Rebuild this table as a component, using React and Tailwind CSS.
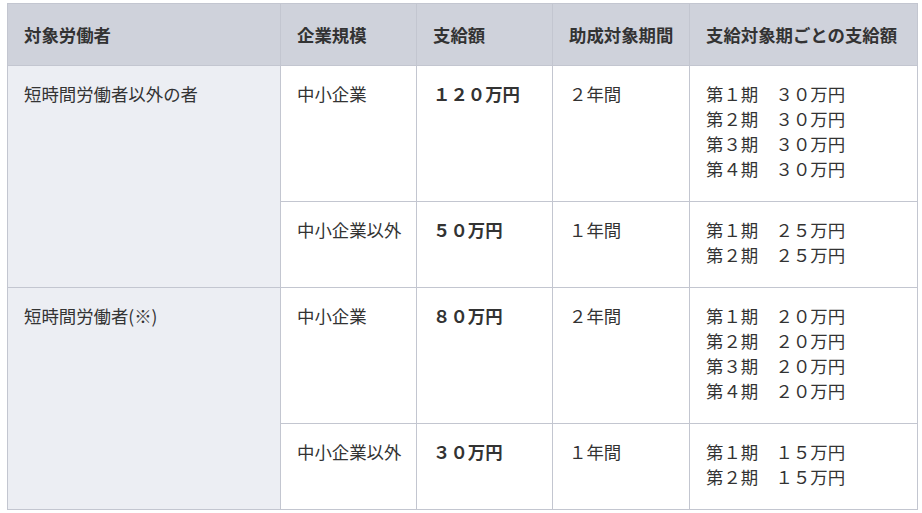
export default function App() {
  const th = "border border-[#c3c6d0] bg-[#cfd2db] pl-4 pr-1 py-[18px] text-left font-bold align-top leading-[25px] whitespace-nowrap";
  const td = "border border-[#c3c6d0] pl-4 pr-1 pt-[15px] pb-[10px] align-top leading-[25px] whitespace-nowrap";
  const tdFirst = "border border-[#c3c6d0] bg-[#eceef3] pl-4 pr-1 pt-[15px] align-top leading-[25px] whitespace-nowrap";
  const Periods = ({ items }) => (
    <div>
      {items.map((t, i) => (
        <div key={i}>{t}</div>
      ))}
    </div>
  );
  return (
    <div
      className="w-[922px] h-[513px] bg-white overflow-hidden pt-[3px] pl-[7px] text-[17.4px] text-[#333333]"
      style={{ fontFamily: '"Noto Sans CJK JP", "Noto Sans", sans-serif' }}
    >
      <table className="border-collapse table-fixed w-[910px]">
        <colgroup>
          <col className="w-[273px]" />
          <col className="w-[136px]" />
          <col className="w-[136px]" />
          <col className="w-[137px]" />
          <col className="w-[228px]" />
        </colgroup>
        <thead>
          <tr className="h-[62px]">
            <th className={th}>対象労働者</th>
            <th className={th}>企業規模</th>
            <th className={th}>支給額</th>
            <th className={th}>助成対象期間</th>
            <th className={th}>支給対象期ごとの支給額</th>
          </tr>
        </thead>
        <tbody>
          <tr className="h-[136px]">
            <td className={tdFirst} rowSpan={2}>短時間労働者以外の者</td>
            <td className={td}>中小企業</td>
            <td className={td + " font-bold"}>１２０万円</td>
            <td className={td}>２年間</td>
            <td className={td}>
              <Periods items={["第１期　３０万円", "第２期　３０万円", "第３期　３０万円", "第４期　３０万円"]} />
            </td>
          </tr>
          <tr className="h-[86px]">
            <td className={td}>中小企業以外</td>
            <td className={td + " font-bold"}>５０万円</td>
            <td className={td}>１年間</td>
            <td className={td}>
              <Periods items={["第１期　２５万円", "第２期　２５万円"]} />
            </td>
          </tr>
          <tr className="h-[136px]">
            <td className={tdFirst} rowSpan={2}>短時間労働者(※)</td>
            <td className={td}>中小企業</td>
            <td className={td + " font-bold"}>８０万円</td>
            <td className={td}>２年間</td>
            <td className={td}>
              <Periods items={["第１期　２０万円", "第２期　２０万円", "第３期　２０万円", "第４期　２０万円"]} />
            </td>
          </tr>
          <tr className="h-[86px]">
            <td className={td}>中小企業以外</td>
            <td className={td + " font-bold"}>３０万円</td>
            <td className={td}>１年間</td>
            <td className={td}>
              <Periods items={["第１期　１５万円", "第２期　１５万円"]} />
            </td>
          </tr>
        </tbody>
      </table>
    </div>
  );
}
